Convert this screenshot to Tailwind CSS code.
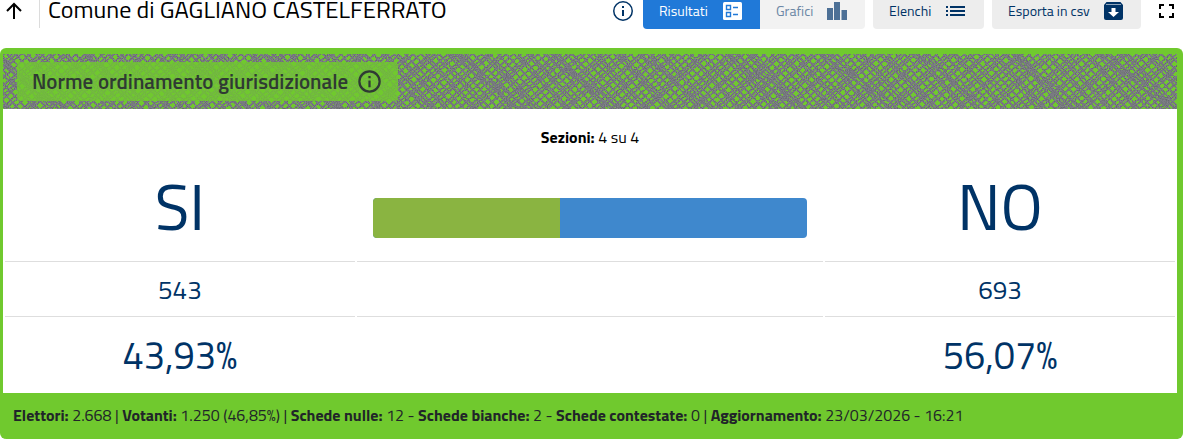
<!DOCTYPE html>
<html lang="it">
  <head>
    <meta charset="UTF-8" />
    <meta name="viewport" content="width=device-width, initial-scale=1.0" />
    <title>Comune di GAGLIANO CASTELFERRATO</title>
    <script src="https://cdn.jsdelivr.net/npm/@tailwindcss/browser@4"></script>
  </head>
  <body class="bg-white font-['Titillium_Web',Roboto,sans-serif] text-black">
    <header class="flex h-7 items-start pr-[5px]">
      <a href="#" aria-label="Torna su" class="flex h-7 w-10 shrink-0 items-start border-r border-[#dcdcdc]">
        <svg class="ml-0.5 h-6 w-6" viewBox="0 0 24 24" fill="none" stroke="currentColor" stroke-width="2">
          <path d="M12 19V4M5 11l7-7 7 7" />
        </svg>
      </a>
      <h1 class="ml-2 text-2xl leading-[18px] font-normal whitespace-nowrap">Comune di GAGLIANO CASTELFERRATO</h1>
      <div class="ml-auto flex h-7 items-start text-sm leading-[22px] text-[#003366]">
        <button type="button" aria-label="Informazioni" class="mr-2">
          <svg class="h-6 w-6" viewBox="0 0 24 24" fill="currentColor">
            <path d="M11 6h2v2h-2zm0 4h2v6h-2zm1-9a10 10 0 1 0 0 20 10 10 0 0 0 0-20zm0 18.500a8.500 8.500 0 1 1 0-17 8.500 8.500 0 0 1 0 17z" />
          </svg>
        </button>
        <nav class="flex gap-2 whitespace-nowrap">
          <div class="flex">
            <button type="button" class="flex h-[29px] w-[117px] items-start justify-between rounded-bl bg-[#2079d8] px-4 text-white">
              Risultati
              <svg class="h-6 w-6" viewBox="0 0 24 24">
                <rect x="3" y="2" width="19" height="18" rx="1.5" fill="#fff" />
                <g fill="none" stroke="#2079d8" stroke-width="1.4">
                  <path d="M6.5 5.5h4v4h-4zM6.5 12.5h4v4h-4zM13 7.5h5M13 14.5h5" />
                </g>
              </svg>
            </button>
            <button type="button" class="flex h-[29px] w-[105px] items-start justify-between rounded-br bg-[#f2f2f2] px-4 text-[#6b87a5]">
              Grafici
              <svg class="h-6 w-6" viewBox="0 0 24 24" fill="#4d7096">
                <path d="M2 8h6v12H2zM9 2h6v18H9zM16.500 10H22v10h-5.500z" />
              </svg>
            </button>
          </div>
          <button type="button" class="flex h-[29px] w-[111px] items-start justify-between rounded-b bg-[#ededed] px-4">
            Elenchi
            <svg class="h-6 w-6" viewBox="0 0 24 24" fill="currentColor">
              <path d="M2 6h2v2H2zM6 6h15v2H6zM2 10h2v2H2zM6 10h15v2H6zM2 14h2v2H2zM6 14h15v2H6z" />
            </svg>
          </button>
          <button type="button" class="flex h-[29px] w-[149px] items-start justify-between rounded-b bg-[#ededed] px-4">
            Esporta in csv
            <svg class="h-6 w-6" viewBox="0 0 24 24">
              <path fill="#003366" d="M5.500 2h14L22 5v13a2 2 0 0 1-2 2H5a2 2 0 0 1-2-2V5z" />
              <path stroke="#8fa5bb" d="M5 4.500h15" />
              <path fill="#fff" d="M10.500 8h4v4H18l-5.500 5L7 12h3.500z" />
            </svg>
          </button>
        </nav>
        <button type="button" aria-label="Schermo intero" class="ml-3.5 text-black">
          <svg class="h-6 w-6" viewBox="0 0 24 24" fill="none" stroke="currentColor" stroke-width="2">
            <path d="M5 9V5h4M14 5h4v4M18 13v4h-4M9 17H5v-4" />
          </svg>
        </button>
      </div>
    </header>

    <main class="mt-5 mr-px rounded-md border-t-[6px] border-r-[6px] border-l-[3px] border-[#70c92e] bg-[#70c92e]">
      <div class="relative h-[55px] px-3.5 py-2">
        <!-- crossed hatch background -->
        <svg class="absolute inset-0 h-full w-full" aria-hidden="true">
          <defs>
            <pattern id="hatch-a" width="97" height="97" patternUnits="userSpaceOnUse" patternTransform="rotate(47)">
              <path
                d="M0 2h97M0 5h97M0 11h97M0 14h97M0 20h97M0 26h97M0 32h97M0 35h97M0 38h97M0 44h97M0 50h97M0 53h97M0 57h97M0 63h97M0 69h97M0 73h97M0 79h97M0 82h97M0 88h97M0 94h97"
                stroke="#000"
                stroke-width="2"
              />
            </pattern>
            <pattern id="hatch-b" width="113" height="113" patternUnits="userSpaceOnUse" patternTransform="rotate(-41)">
              <path
                d="M0 1h113M0 6h113M0 9h113M0 12h113M0 18h113M0 24h113M0 27h113M0 31h113M0 34h113M0 40h113M0 43h113M0 48h113M0 54h113M0 57h113M0 60h113M0 66h113M0 70h113M0 73h113M0 79h113M0 82h113M0 88h113M0 92h113M0 95h113M0 101h113M0 104h113M0 109h113"
                stroke="#000"
                stroke-width="2"
              />
            </pattern>
            <pattern id="hatch-c" width="171" height="171" patternUnits="userSpaceOnUse" patternTransform="rotate(38)">
              <path d="M0 5h171M0 9h171M0 62h171M0 67h171M0 121h171" stroke="#000" stroke-width="2" />
            </pattern>
            <filter id="grain" x="0" y="0" width="100%" height="100%" color-interpolation-filters="sRGB">
              <feTurbulence type="fractalNoise" baseFrequency="0.9" numOctaves="1" seed="4" result="noise" />
              <feColorMatrix in="noise" values="0.25 0 0 0 0.34  0.25 0 0 0 0.35  0.25 0 0 0 0.37  0 0 0 0 1" result="gray" />
              <feComponentTransfer in="SourceAlpha" result="mask">
                <feFuncA type="discrete" tableValues="0 1" />
              </feComponentTransfer>
              <feComposite in="gray" in2="mask" operator="in" />
            </filter>
          </defs>
          <g filter="url(#grain)">
            <rect width="100%" height="100%" fill="url(#hatch-a)" />
            <rect width="100%" height="100%" fill="url(#hatch-b)" />
            <rect width="100%" height="100%" fill="url(#hatch-c)" />
          </g>
        </svg>
        <div class="relative flex h-[39px] w-fit items-center gap-2 rounded bg-[#70c92e]/80 px-[15px] text-[#2f3a33]">
          <h2 class="text-[21px] font-semibold whitespace-nowrap">Norme ordinamento giurisdizionale</h2>
          <button type="button" aria-label="Dettagli quesito">
            <svg class="h-[27px] w-[27px]" viewBox="0 0 24 24" fill="currentColor">
              <path d="M11 7h2v2h-2zm0 4h2v6h-2zm1-9a10 10 0 1 0 0 20 10 10 0 0 0 0-20zm0 18a8 8 0 1 1 0-16 8 8 0 0 1 0 16z" />
            </svg>
          </button>
        </div>
      </div>

      <section class="bg-white">
        <p class="pt-4 text-center text-base leading-6"><b>Sezioni:</b> 4 su 4</p>
        <table class="w-full table-fixed border-separate border-spacing-x-0.5 border-spacing-y-0 text-center text-[#003366]">
          <colgroup>
            <col class="w-[30%]" />
            <col class="w-[40%]" />
            <col class="w-[30%]" />
          </colgroup>
          <tbody>
            <tr>
              <th scope="col" class="h-[113px] border-b border-[#dedede] px-0 pt-0.5 pb-0 text-[64px] leading-none font-normal">SI</th>
              <td class="border-b border-[#dedede] px-4 pt-[26px] pb-0">
                <div class="flex h-10 overflow-hidden rounded bg-[#3f88cd]">
                  <div class="bg-[#8ab441]" style="width: 43%"></div>
                </div>
              </td>
              <th scope="col" class="border-b border-[#dedede] px-0 pt-0.5 pb-0 text-[64px] leading-none font-normal">NO</th>
            </tr>
            <tr class="text-[26px]">
              <td class="h-[55px] border-b border-[#dedede] p-0">543</td>
              <td class="border-b border-[#dedede] p-0"></td>
              <td class="border-b border-[#dedede] p-0">693</td>
            </tr>
            <tr class="text-[38px]">
              <td class="h-[76px] p-0">43,93%</td>
              <td class="p-0"></td>
              <td class="p-0">56,07%</td>
            </tr>
          </tbody>
        </table>
      </section>

      <footer class="px-2.5 pt-2.5 pb-3 text-base leading-6 whitespace-nowrap text-[#212529]">
        <b>Elettori:</b> 2.668 | <b>Votanti:</b> 1.250 (46,85%) | <b>Schede nulle:</b> 12 - <b>Schede bianche:</b> 2 -
        <b>Schede contestate:</b> 0 | <b>Aggiornamento:</b> 23/03/2026 - 16:21
      </footer>
    </main>
  </body>
</html>
